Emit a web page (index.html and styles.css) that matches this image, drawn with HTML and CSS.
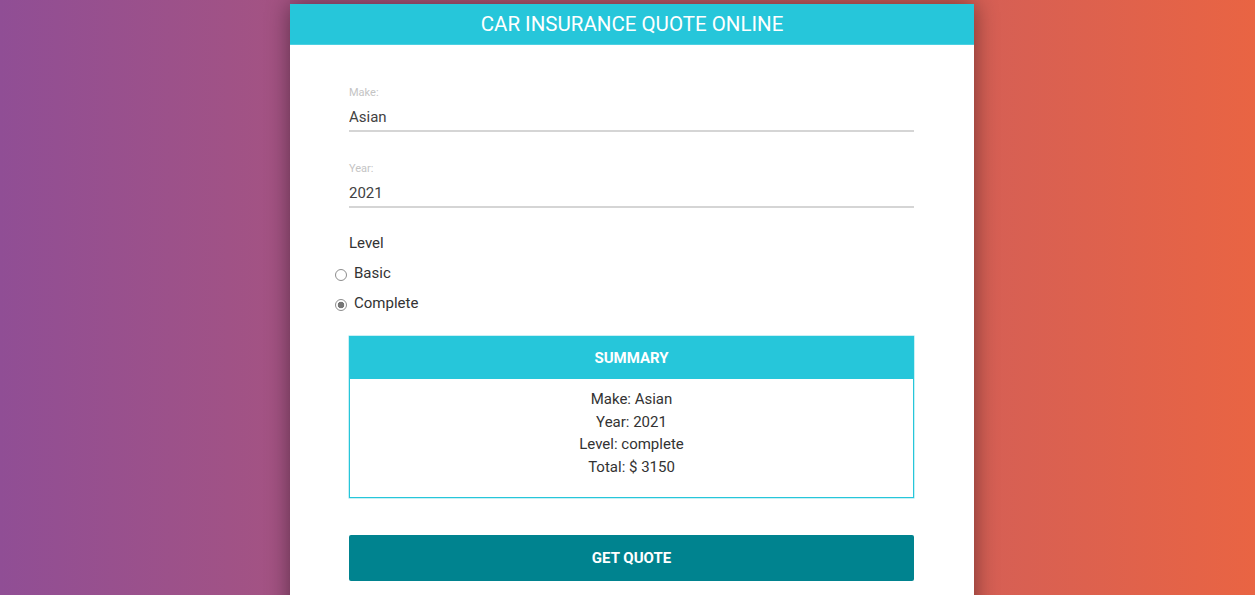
FILE: index.html
```html
<!DOCTYPE html>
<html>
<head>
<meta charset="utf-8">
<link rel="stylesheet" href="styles.css">
</head>
<body>
<div class="card">
  <header class="card-header">CAR INSURANCE QUOTE ONLINE</header>
  <form class="form">
    <div class="field">
      <label class="field-label">Make:</label>
      <input class="field-input" type="text" value="Asian">
    </div>
    <div class="field">
      <label class="field-label">Year:</label>
      <input class="field-input" type="text" value="2021">
    </div>
    <div class="level">
      <div class="level-title">Level</div>
      <label class="radio-row"><input type="radio" name="level" class="radio"> Basic</label>
      <label class="radio-row"><input type="radio" name="level" class="radio" checked> Complete</label>
    </div>
    <div class="summary">
      <div class="summary-header">SUMMARY</div>
      <div class="summary-body">
        <p>Make: Asian</p>
        <p>Year: 2021</p>
        <p>Level: complete</p>
        <p>Total: $ 3150</p>
      </div>
    </div>
    <button type="button" class="btn">GET QUOTE</button>
  </form>
</div>
</body>
</html>
```
FILE: styles.css
```css
* { box-sizing: border-box; }
html, body { height: 100%; }
body {
  margin: 0;
  padding-left: 9px;
  font-family: Roboto, "Liberation Sans", sans-serif;
  background: linear-gradient(to right, #904e95, #e96443);
  overflow: hidden;
}
.card {
  width: 684px;
  margin: 4px auto 0;
  background: #fff;
  min-height: 700px;
  box-shadow: 0 0 22px rgba(0,0,0,0.45);
}
.card-header {
  height: 41px;
  background: #26c6da;
  color: #fff;
  font-size: 20.5px;
  line-height: 40px;
  text-align: center;
  border-bottom: 1px solid #4dd0e1;
}
.form {
  padding: 41px 60px 0 59px;
}
.field {
  display: flex;
  flex-direction: column;
  margin-bottom: 30px;
}
.field-label {
  font-size: 11px;
  line-height: 14px;
  margin-bottom: 3px;
  color: #c4c4c4;
}
.field-input {
  font-family: inherit;
  font-size: 15px;
  color: #424242;
  height: 29px;
  padding: 0;
  border: none;
  border-bottom: 2px solid #d5d5d5;
  outline: none;
  background: transparent;
}
.level {
  margin-top: -5px;
  color: #333;
  font-size: 15px;
}
.level-title {
  line-height: 20px;
  margin-bottom: 10px;
}
.radio-row {
  display: flex;
  align-items: center;
  line-height: 20px;
  height: 20px;
  margin-left: -14px;
  margin-bottom: 10px;
  gap: 7px;
}
.radio {
  appearance: none;
  -webkit-appearance: none;
  margin: 3px 0 0 0;
  width: 12px;
  height: 12px;
  border: 1px solid #8d8d8d;
  border-radius: 50%;
  background: #fff;
}
.radio:checked {
  background: radial-gradient(circle, #757575 0, #757575 3px, #fff 3.6px);
}
.summary {
  margin-top: 23px;
  border: 1px solid #26c6da;
  box-shadow: 0 0 0 0.5px rgba(38,198,218,0.5);
}
.summary-header {
  height: 42px;
  background: #26c6da;
  color: #fff;
  font-weight: bold;
  font-size: 15px;
  line-height: 42px;
  text-align: center;
}
.summary-body {
  padding: 9px 0 19px;
  text-align: center;
  color: #333;
  font-size: 15px;
}
.summary-body p {
  margin: 0;
  line-height: 22.6px;
}
.btn {
  display: block;
  width: 100%;
  margin-top: 37px;
  height: 46px;
  border: none;
  border-radius: 2px;
  background: #00838f;
  color: #fff;
  font-family: inherit;
  font-weight: bold;
  font-size: 15px;
}
```
